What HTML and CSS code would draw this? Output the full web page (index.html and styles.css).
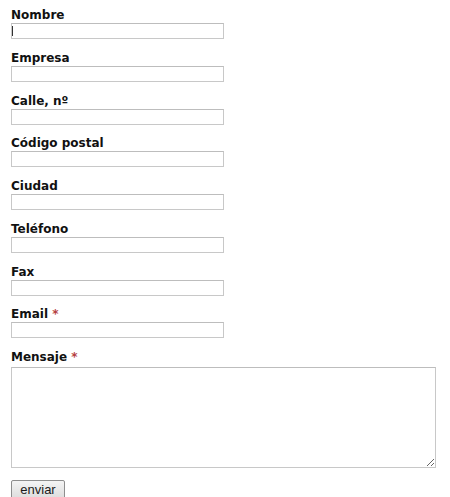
FILE: index.html
```html
<!DOCTYPE html>
<html lang="es">
<head>
<meta charset="utf-8">
<title>Contacto</title>
<link rel="stylesheet" href="styles.css">
</head>
<body>
<form class="contact">
  <div class="field">
    <label class="label" for="f1">Nombre</label>
    <div class="input-wrap">
      <input class="text" id="f1" type="text">
      <span class="caret"></span>
    </div>
  </div>
  <div class="field">
    <label class="label" for="f2">Empresa</label>
    <input class="text" id="f2" type="text">
  </div>
  <div class="field">
    <label class="label" for="f3">Calle, nº</label>
    <input class="text" id="f3" type="text">
  </div>
  <div class="field">
    <label class="label" for="f4">Código postal</label>
    <input class="text" id="f4" type="text">
  </div>
  <div class="field">
    <label class="label" for="f5">Ciudad</label>
    <input class="text" id="f5" type="text">
  </div>
  <div class="field">
    <label class="label" for="f6">Teléfono</label>
    <input class="text" id="f6" type="text">
  </div>
  <div class="field">
    <label class="label" for="f7">Fax</label>
    <input class="text" id="f7" type="text">
  </div>
  <div class="field">
    <label class="label" for="f8">Email <span class="req">*</span></label>
    <input class="text" id="f8" type="text">
  </div>
  <div class="field field-msg">
    <label class="label" for="f9">Mensaje <span class="req">*</span></label>
    <textarea class="message" id="f9"></textarea>
  </div>
  <button class="submit" type="button">enviar</button>
</form>
</body>
</html>
```
FILE: styles.css
```css
html, body {
  margin: 0;
  padding: 0;
  background: #ffffff;
}

.contact {
  padding: 8px 0 0 11px;
  font-family: "DejaVu Sans", Verdana, sans-serif;
  color: #1a1a1a;
}

.field {
  display: flex;
  flex-direction: column;
  align-items: flex-start;
  margin-bottom: 11.75px;
}

.label {
  display: block;
  font-size: 12px;
  line-height: 15px;
  font-weight: bold;
  color: #111111;
}

.req {
  color: #b5403f;
}

.input-wrap {
  position: relative;
}

.text {
  display: block;
  box-sizing: border-box;
  width: 213px;
  height: 16px;
  margin: 0;
  padding: 0 2px;
  border: 1px solid #c8c8c8;
  border-top-color: #bdbdbd;
  background: #ffffff;
  font-size: 11px;
  outline: none;
}

.caret {
  position: absolute;
  left: 1px;
  top: 3px;
  width: 1px;
  height: 10px;
  background: #333333;
}

.field-msg {
  margin-bottom: 12px;
}

.message {
  display: block;
  box-sizing: border-box;
  width: 425px;
  height: 101px;
  margin: 2px 0 0 0;
  padding: 2px;
  border: 1px solid #c8c8c8;
  border-top-color: #bdbdbd;
  background: #ffffff;
  font-family: "DejaVu Sans", Verdana, sans-serif;
  font-size: 11px;
  outline: none;
  resize: both;
}

.submit {
  display: block;
  box-sizing: border-box;
  width: 54px;
  height: 20px;
  margin: 0;
  padding: 0 0 1px 0;
  border: 1px solid #8e8e8e;
  border-radius: 2px;
  background: linear-gradient(#f4f4f4, #dcdcdc);
  font-family: "Liberation Sans", Arial, sans-serif;
  font-size: 13px;
  line-height: 16px;
  color: #1a1a1a;
}
```
